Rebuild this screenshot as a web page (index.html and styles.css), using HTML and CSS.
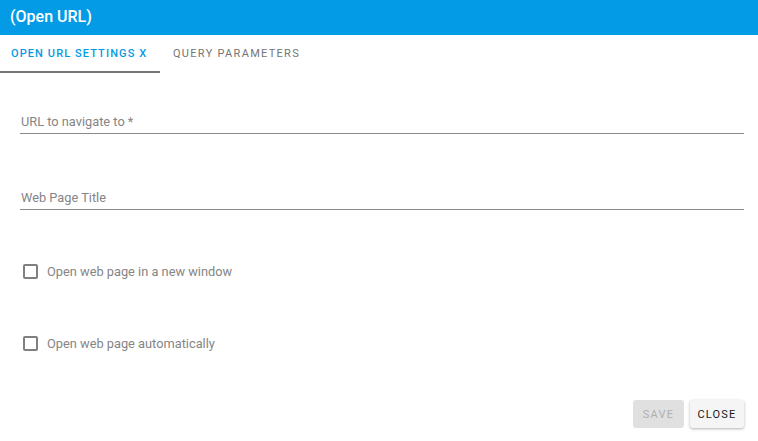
FILE: index.html
```html
<!DOCTYPE html>
<html lang="en">
<head>
  <meta charset="UTF-8">
  <title>(Open URL)</title>
  <link rel="stylesheet" href="styles.css">
</head>
<body>
  <div class="dialog">
    <div class="title-bar">(Open URL)</div>
    <div class="tabs">
      <div class="tab active">Open URL Settings X</div>
      <div class="tab">Query Parameters</div>
    </div>
    <div class="content">
      <div class="field field-first"><label>URL to navigate to *</label></div>
      <div class="field"><label>Web Page Title</label></div>
      <div class="check check-first"><span class="box"></span><span>Open web page in a new window</span></div>
      <div class="check"><span class="box"></span><span>Open web page automatically</span></div>
    </div>
    <div class="actions">
      <button class="btn btn-save" disabled>Save</button>
      <button class="btn btn-close">Close</button>
    </div>
  </div>
</body>
</html>
```

FILE: styles.css
```css
body {
  margin: 0;
  font-family: Roboto, "Liberation Sans", sans-serif;
  background: #fff;
}
.dialog {
  width: 758px;
  height: 441px;
  display: flex;
  flex-direction: column;
}
.title-bar {
  height: 35px;
  background-color: #039be5;
  color: #fff;
  font-size: 16px;
  font-weight: 500;
  line-height: 33px;
  padding-left: 10px;
  box-sizing: border-box;
}
.tabs {
  display: flex;
  height: 38px;
}
.tab {
  text-transform: uppercase;
  white-space: nowrap;
  font-size: 11px;
  font-weight: 400;
  letter-spacing: 1.3px;
  color: #757575;
  padding: 0 12px 0 13px;
  line-height: 38px;
  box-sizing: border-box;
}
.tab.active {
  width: 160px;
  color: #039be5;
  font-weight: 500;
  letter-spacing: 1.1px;
  border-bottom: 2px solid #757575;
  padding-left: 11px;
}
.content {
  padding: 0 14px 0 20px;
  flex: 1;
}
.field {
  border-bottom: 1px solid #8a8a8a;
  height: 19px;
  padding-top: 3px;
  margin-top: 53px;
}
.field-first {
  margin-top: 38px;
}
.field label {
  display: block;
  color: #858585;
  font-size: 12.8px;
  line-height: 16px;
  padding-left: 1px;
}
.check {
  display: flex;
  align-items: center;
  gap: 9px;
  color: #858585;
  font-size: 12.8px;
  margin-top: 56px;
  padding-left: 3px;
  height: 16px;
}
.check-first {
  margin-top: 53px;
}
.box {
  width: 11px;
  height: 11px;
  border: 2px solid #808080;
  border-radius: 2px;
}
.actions {
  display: flex;
  justify-content: flex-end;
  gap: 6px;
  padding: 0 14px 13px 0;
}
.btn {
  font-family: Roboto, "Liberation Sans", sans-serif;
  text-transform: uppercase;
  font-size: 11px;
  font-weight: 400;
  letter-spacing: 1.2px;
  height: 28px;
  border: none;
  border-radius: 3px;
  padding: 0 6px;
}
.btn-save {
  width: 51px;
  background: #e0e0e0;
  color: #b0b0b0;
}
.btn-close {
  width: 54px;
  background: #f5f5f5;
  color: #1a1a1a;
  box-shadow: 0 1px 3px rgba(0,0,0,0.3);
}
```
